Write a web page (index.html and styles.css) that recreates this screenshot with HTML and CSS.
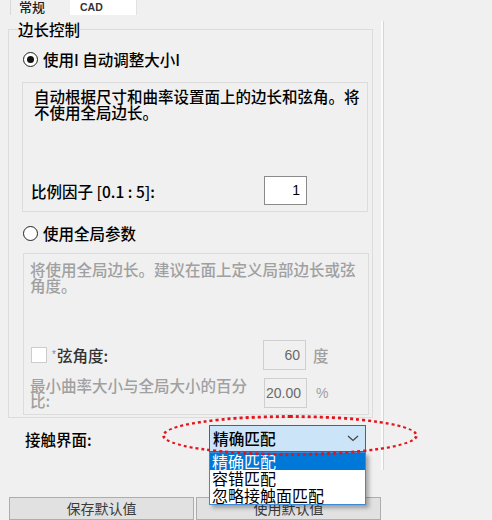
FILE: index.html
```html
<!DOCTYPE html>
<html lang="zh-CN">
<head>
    <meta charset="UTF-8">
    <title>网格设置</title>
    <link rel="stylesheet" href="styles.css">
</head>
<body>
    <div class="tabs">
        <div class="tab">常规</div>
        <div class="tab tab-active">CAD</div>
    </div>

    <div class="page">
        <fieldset class="group">
            <legend>边长控制</legend>

            <div class="radio-row"><span class="radio checked"></span>使用I 自动调整大小I</div>
            <div class="panel panel-auto">
                <p class="desc">自动根据尺寸和曲率设置面上的边长和弦角。将<br>不使用全局边长。</p>
                <div class="field-row">
                    <span class="field-label">比例因子 [0.1 : 5]:</span>
                    <span class="num">1</span>
                </div>
            </div>

            <div class="radio-row radio-global"><span class="radio"></span>使用全局参数</div>
            <div class="panel panel-global">
                <p class="desc muted">将使用全局边长。建议在面上定义局部边长或弦<br>角度。</p>
                <div class="field-row check-row">
                    <span class="field-label"><span class="check"></span><span class="star">*</span>弦角度:</span>
                    <span class="num disabled">60</span>
                    <span class="unit">度</span>
                </div>
                <div class="field-row pct-row">
                    <span class="field-label muted">最小曲率大小与全局大小的百分比:</span>
                    <span class="num disabled">20.00</span>
                    <span class="unit unit-pct">%</span>
                </div>
            </div>
        </fieldset>

        <div class="contact-row">
            <span class="contact-label">接触界面:</span>
            <div class="combo">
                <div class="combo-box">
                    <span>精确匹配</span>
                    <svg width="12" height="7" viewBox="0 0 12 7"><path d="M1 1 L6 5.5 L11 1" fill="none" stroke="#444" stroke-width="1.3"/></svg>
                </div>
                <ul class="combo-list">
                    <li class="selected">精确匹配</li>
                    <li>容错匹配</li>
                    <li>忽略接触面匹配</li>
                </ul>
                <div class="ring"></div>   <!-- red marker round the combo -->
            </div>
        </div>
    </div>

    <div class="buttons">
        <button type="button">保存默认值</button>
        <button type="button">使用默认值</button>
    </div>
</body>
</html>
```

FILE: styles.css
```css
body {
    margin: 0;
    width: 492px;
    height: 520px;
    overflow: hidden;
    background-color: #f0f0f0;
    font-family: "Noto Sans CJK SC", sans-serif;
    font-size: 15.5px;
    font-weight: 500;
    color: #000;
}

/* tab strip, cut at the top */
.tabs {
    display: flex;
    height: 18px;
    padding-left: 10px;
}
.tab {
    box-sizing: border-box;
    width: 60px;
    height: 15px;
    padding-left: 8px;
    border-left: 1px solid #d9d9d9;
    font-size: 13px;
    line-height: 13px;
    color: #222;
    overflow: hidden;
}
.tab-active {
    width: 67px;
    padding-left: 10px;
    border-left: none;
    border-right: 1px solid #e2e2e2;
    background-color: #fff;
    font-family: "Liberation Sans", sans-serif;
    font-weight: bold;
    font-size: 10.5px;
    line-height: 14px;
    color: #333;
}

.page {
    box-sizing: border-box;
    width: 384px;
    height: 449px;
    border-right: 1px solid #d6d6d6;
    box-shadow: inset -2px 0 0 #fbfbfb;
}

.group {
    box-sizing: border-box;
    width: 365px;
    margin: 3px 0 0 8px;
    padding: 13px 3px 2px 13px;
    border: 1px solid #dcdcdc;
}
.group legend {
    margin-left: -4px;
    padding: 0;
    line-height: 17px;
}

.radio-row {
    display: flex;
    align-items: center;
    gap: 5px;
    height: 17px;
    line-height: 17px;
    margin-left: 1px;
}
.radio-global {
    margin-top: 13px;
}
.radio {
    box-sizing: border-box;
    width: 15px;
    height: 15px;
    border: 1px solid #222;
    border-radius: 50%;
    background-color: #fff;
    display: flex;
    align-items: center;
    justify-content: center;
}
.radio.checked::after {
    content: "";
    width: 7px;
    height: 7px;
    border-radius: 50%;
    background-color: #111;
}

.panel {
    box-sizing: border-box;
    display: flex;
    flex-direction: column;
    border: 1px solid #dcdcdc;
}
.panel-auto {
    width: 346px;
    height: 130px;
    margin-top: 14px;
    padding: 5px 0 6px 8px;
}
.panel-auto .desc {
    margin-left: 3px;
}
.panel-global {
    width: 346px;
    height: 162px;
    margin: 11px 0 0 1px;
    padding: 7px 0 6px 6px;
}

.desc {
    margin: 0;
    line-height: 16px;
}
.muted {
    color: #a0a0a0;
}

.field-row {
    display: flex;
    align-items: center;
    margin-top: auto;
    height: 29px;
}
.field-label {
    width: 233px;
    display: flex;
    align-items: center;
}
.num {
    box-sizing: border-box;
    width: 43px;
    height: 29px;
    padding-right: 6px;
    border: 1px solid #8a8a8a;
    background-color: #fff;
    font-family: "Liberation Sans", sans-serif;
    font-size: 14px;
    font-weight: normal;
    line-height: 27px;
    text-align: right;
}
.num.disabled {
    height: 30px;
    line-height: 28px;
    padding-right: 5px;
    border-color: #cfcfcf;
    background-color: #f0f0f0;
    color: #6a6a6a;
}
.unit {
    margin-left: 7px;
    color: #a0a0a0;
}
.unit-pct {
    margin-left: 9px;
    font-family: "Liberation Sans", sans-serif;
    font-size: 14px;
    font-weight: normal;
}

.check-row {
    height: 30px;
}
.check {
    box-sizing: border-box;
    width: 16px;
    height: 16px;
    margin: 0 5px 0 1px;
    border: 1px solid #cccccc;
    background-color: #fff;
}
.star {
    align-self: flex-start;
    margin: 6px 1px 0 0;
    font-family: "Liberation Sans", sans-serif;
    font-size: 10px;
    line-height: 10px;
    color: #888;
}
.check-row .field-label {
    color: #333;
}

.pct-row {
    height: 30px;
    margin-top: 8px;
}
.pct-row .field-label {
    width: 234px;
    line-height: 15px;
}

/* contact surface combo */
.contact-row {
    display: flex;
    align-items: center;
    margin-top: 7px;
}
.contact-label {
    width: 184px;
    margin-left: 25px;
}
.combo {
    position: relative;
    width: 157px;
}
.combo-box {
    box-sizing: border-box;
    height: 27px;
    display: flex;
    align-items: center;
    justify-content: space-between;
    padding: 0 6px 0 3px;
    border: 1px solid #0078d7;
    background-color: #cce4f7;
    font-size: 15.7px;
}
.combo-list {
    position: absolute;
    top: 27px;
    left: 0;
    z-index: 3;
    box-sizing: border-box;
    width: 157px;
    margin: 0;
    padding: 0;
    list-style: none;
    border: 1px solid #3c8ad6;
    background-color: #fff;
    box-shadow: 3px 3px 4px rgba(0, 0, 0, 0.3);
    font-size: 16px;
    font-weight: normal;
    line-height: 17px;
}
.combo-list li {
    padding-left: 2px;
    height: 17px;
}
.combo-list .selected {
    background-color: #0078d7;
    color: #fff;
}
.ring {
    position: absolute;
    left: -47px;
    top: -10px;
    z-index: 4;
    box-sizing: border-box;
    width: 256px;
    height: 41px;
    border: 3px dotted #e3141c;
    border-radius: 50%;
    pointer-events: none;
}

.buttons {
    display: flex;
    gap: 2px;
    margin: 27px 0 0 9px;
}
.buttons button {
    box-sizing: border-box;
    width: 185px;
    height: 23px;
    padding: 0;
    border: 1px solid #adadad;
    background-color: #e1e1e1;
    font-family: "Noto Sans CJK SC", sans-serif;
    font-size: 14px;
    line-height: 21px;
    color: #3a3a3a;
}
```
